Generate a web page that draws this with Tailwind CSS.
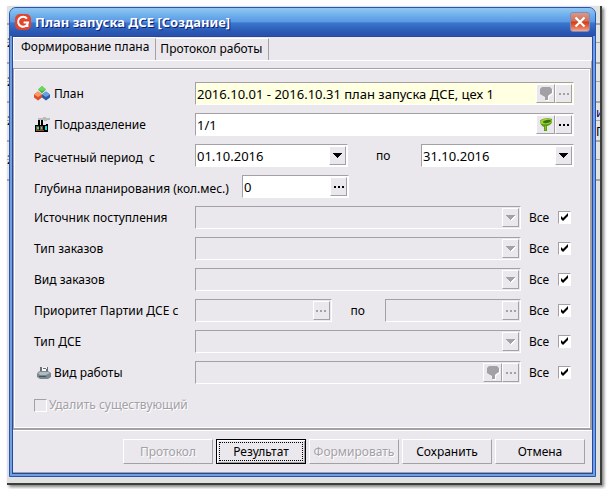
<!DOCTYPE html>
<html lang="ru">
<head>
<meta charset="utf-8">
<meta name="viewport" content="width=device-width, initial-scale=1">
<title>План запуска ДСЕ [Создание]</title>
<script src="https://cdn.jsdelivr.net/npm/@tailwindcss/browser@4"></script>
</head>
<body class="bg-white font-['Noto_Sans','Open_Sans',sans-serif] text-xs leading-4 text-black">

<!-- Shared icon symbols -->
<svg class="hidden" aria-hidden="true">
  <symbol id="arrow" viewBox="0 0 9 5"><path d="M0 0h9v1h-1v1h-1v1h-1v1h-1v1h-1v-1h-1v-1h-1v-1h-1v-1h-1z" fill="currentColor"/></symbol>
  <symbol id="dots" viewBox="0 0 10 2"><path d="M0 0h2v2h-2zM4 0h2v2h-2zM8 0h2v2h-2z" fill="currentColor"/></symbol>
  <symbol id="funnel" viewBox="0 0 14 14"><path d="M4 1h8l2 2v4l-3 2-1 1v4h-3v-3l-2-1-3-2v-5z" fill="#fff"/><path d="M3 0h8l2 2v4l-3 2-1 1v4h-3v-3l-2-1-3-2v-5z" fill="#a3a1a6"/></symbol>
  <symbol id="tick" viewBox="0 0 9 9"><path d="M1 3v3l2 2 5-5v-3l-5 5z" fill="#000"/></symbol>
</svg>

<div class="relative mr-[5px] ml-[7px] mt-[6px] mb-1 border-r-2 border-b-2 border-[#3c3e3c] bg-[#e0e2e0] pl-[2px] pr-[4px] pt-px pb-[6px] shadow-[2px_2px_3px_rgba(0,0,0,0.5)]">

  <!-- Slivers of the table behind the dialog -->
  <div class="absolute top-[17px] left-0 h-[158px] w-[2px] overflow-hidden bg-[repeating-linear-gradient(to_bottom,#a3a3a8_0_2px,#e2e4e2_2px_19px,#a3a3a8_19px_20px,#e2e4e2_20px_39px)] leading-[39px]">2<br>2<br>2<br>2</div>
  <div class="absolute top-[17px] right-0 h-[158px] w-[4px] overflow-hidden bg-[repeating-linear-gradient(to_bottom,#a3a3a8_0_2px,#e2e4e2_2px_19px,#a3a3a8_19px_20px,#e2e4e2_20px_39px)] pt-[80px] leading-[19px]"><span class="text-[#000080]">из</span><br>Гч</div>

  <section class="relative overflow-hidden rounded-t-[7px] border border-[#2a52b8] bg-[#6fa0e0]" role="dialog" aria-labelledby="ttl">
    <header class="flex h-[28px] items-center gap-1 bg-[linear-gradient(to_bottom,#92c8f0_0,#6fb0ec_25%,#5a98e4_50%,#3a78cc_53%,#2a58b4_85%,#2850ac_100%)] pl-[5px] pr-[5px]">
      <svg class="size-4" viewBox="0 0 16 16" aria-hidden="true"><rect width="16" height="16" rx="5" fill="#e2452c"/><path d="M12 4.600A5 5 0 1 0 13 8.600H8.600M12.400 8.600V13" fill="none" stroke="#fff" stroke-width="2"/></svg>
      <h1 id="ttl" class="grow text-[13px] font-bold text-white [text-shadow:1px_1px_0_#0a1e7c]">План запуска ДСЕ [Создание]</h1>
      <button class="grid size-5 place-items-center rounded-[3px] border border-[#7c8cc0] bg-[linear-gradient(to_bottom,#d89888_0,#d07058_45%,#d43c14_50%,#e87050_80%,#f4a890_100%)]" aria-label="Закрыть">
        <svg class="size-[12px]" viewBox="0 0 12 12"><path d="M1.500 1.500 10.500 10.500M10.500 1.500 1.500 10.500" stroke="#fff" stroke-width="2.200"/></svg>
      </button>
    </header>

    <div class="mx-[2px] mb-[2px] border border-t-0 border-[#2848a0] bg-[#eae8ed]">
      <div class="border-t border-[#2848a0]">
        <!-- Tabs -->
        <nav class="flex h-[23px] items-end" role="tablist">
          <button role="tab" aria-selected="true" class="h-[23px] border-t border-l border-white pl-[7px] pr-[6px] pb-1">Формирование плана</button>
          <button role="tab" aria-selected="false" class="h-[22px] border-t border-l border-r border-t-white border-l-[#a3a1a6] border-r-[#a3a1a6] pl-[4px] pr-[6px] pb-px">Протокол работы</button>
        </nav>
        <div class="h-[8px] border-t border-r border-t-white border-r-[#a3a1a6]"></div>

        <!-- Form page -->
        <main class="border-t border-l border-b-2 border-r-2 border-[#a3a1a6]">
          <form class="flex flex-col gap-2 border border-white pt-3 pr-[15px] pb-[14px] pl-[19px]">

            <div class="flex h-[23px] items-center">
              <label for="plan" class="flex w-[161px] items-center gap-[4px]">
                <svg class="size-4" viewBox="0 0 16 16" aria-hidden="true"><path d="M8 0l4 3.500-4 4-4-4z" fill="#3cb43c"/><path d="M8 0l4 3.500-4 1.500-4-1.500z" fill="#6cd860"/><path d="M4 5.500l4 3v3l-4 3-4-3v-3z" fill="#d8502c"/><path d="M4 5.500l4 3-4 2.500-4-2.500z" fill="#f89868"/><path d="M12 5.500l4 3v3l-4 3-4-3v-3z" fill="#2c5ca8"/><path d="M12 5.500l4 3-4 2.500-4-2.500z" fill="#6ca0e4"/></svg>
                План</label>
              <div class="flex h-full min-w-0 flex-1 border border-[#a3a1a6] border-r-white border-b-white bg-[#ffffe1] p-px">
                <input id="plan" readonly value="2016.10.01 - 2016.10.31 план запуска ДСЕ, цех 1" class="min-w-0 flex-1 text-[13px] outline-none">
                <button type="button" disabled aria-label="Фильтр плана" class="grid w-[19px] place-items-center border border-white border-r-[#a3a1a6] border-b-[#a3a1a6] bg-[#eae8ed]"><svg class="size-[14px]"><use href="#funnel"/></svg></button>
                <button type="button" disabled aria-label="Выбрать план" class="grid w-[17px] place-items-center border border-white border-r-[#a3a1a6] border-b-[#a3a1a6] bg-[#eae8ed] text-[#a3a1a6]"><svg class="h-[2px] w-[10px]"><use href="#dots"/></svg></button>
              </div>
            </div>

            <div class="flex h-[23px] items-center">
              <label for="dept" class="flex w-[161px] items-center gap-[4px]">
                <svg class="size-4" viewBox="0 0 16 16" aria-hidden="true"><path d="M4 1h5v-1h3v1h4v2h-3v1h-3v-1h-6z" fill="#bbb"/><path d="M4 3h2v5h1v-5h2v5h3v-1h2v8h-13v-7h3z" fill="#000"/><path d="M2 9h3v4h-3zM6 9h3v4h-3zM2 13h8v1h-8z" fill="#8c4c14"/><path d="M3 10h2v2h-2zM7 10h1v2h-1zM11 9h2v4h-2z" fill="#00e8f8"/></svg>
                Подразделение</label>
              <div class="flex h-full min-w-0 flex-1 border border-[#a3a1a6] border-r-white border-b-white bg-white p-px">
                <input id="dept" value="1/1" class="min-w-0 flex-1 text-[13px] outline-none">
                <button type="button" aria-label="Фильтр подразделений" class="grid w-[19px] place-items-center border border-white border-r-[#a3a1a6] border-b-[#a3a1a6] bg-[#eae8ed]"><svg class="size-[14px]" viewBox="0 0 14 14"><path d="M1 3q1-2 5-2.500t7 .5v3q-1 3-5 4v5h-3v-4q-4-2-4-6z" fill="#5c9c14"/><ellipse cx="7" cy="3.500" rx="6" ry="2.700" transform="rotate(-10 7 3.500)" fill="#a0d038"/><ellipse cx="8" cy="3.500" rx="4" ry="1.600" transform="rotate(-10 8 3.500)" fill="#3c7010"/><path d="M6 8h1v4h-1z" fill="#90c030"/></svg></button>
                <button type="button" aria-label="Выбрать подразделение" class="grid w-[17px] place-items-center border border-white border-r-[#a3a1a6] border-b-[#a3a1a6] bg-[#eae8ed]"><svg class="h-[2px] w-[10px]"><use href="#dots"/></svg></button>
              </div>
            </div>

            <div class="flex h-[23px] items-center">
              <label for="from" class="w-[161px] whitespace-pre pt-1">Расчетный период  с</label>
              <div class="relative h-full min-w-0 flex-1 border border-[#a3a1a6] border-r-white border-b-white bg-white p-px">
                <select id="from" class="block size-full appearance-none text-[13px] outline-none"><option>01.10.2016</option></select>
                <span class="pointer-events-none absolute inset-y-px right-px grid w-[17px] place-items-center border border-white border-r-[#a3a1a6] border-b-[#a3a1a6] bg-[#eae8ed]"><svg class="h-[5px] w-[9px]"><use href="#arrow"/></svg></span>
              </div>
              <label for="to" class="w-[73px] pl-[28px]">по</label>
              <div class="relative h-full min-w-0 flex-1 border border-[#a3a1a6] border-r-white border-b-white bg-white p-px">
                <select id="to" class="block size-full appearance-none text-[13px] outline-none"><option>31.10.2016</option></select>
                <span class="pointer-events-none absolute inset-y-px right-px grid w-[17px] place-items-center border border-white border-r-[#a3a1a6] border-b-[#a3a1a6] bg-[#eae8ed]"><svg class="h-[5px] w-[9px]"><use href="#arrow"/></svg></span>
              </div>
            </div>

            <div class="flex h-[23px] items-center">
              <label for="depth" class="w-[208px] whitespace-nowrap pt-1">Глубина планирования (кол.мес.)</label>
              <div class="flex h-full w-[107px] border border-[#a3a1a6] border-r-white border-b-white bg-white p-px">
                <input id="depth" value="0" class="min-w-0 flex-1 text-[13px] outline-none">
                <button type="button" aria-label="Выбрать глубину" class="grid w-[17px] place-items-center border border-white border-r-[#a3a1a6] border-b-[#a3a1a6] bg-[#eae8ed]"><svg class="h-[2px] w-[10px]"><use href="#dots"/></svg></button>
              </div>
            </div>

            <div class="flex h-[23px] items-center">
              <label for="src" class="w-[161px]">Источник поступления</label>
              <div class="relative h-full min-w-0 flex-1 border border-[#a3a1a6] border-r-white border-b-white">
                <select id="src" disabled class="block size-full appearance-none"></select>
                <span class="pointer-events-none absolute inset-y-px right-px grid w-[17px] place-items-center border border-white border-r-[#a3a1a6] border-b-[#a3a1a6] text-[#a3a1a6]"><svg class="h-[5px] w-[9px] drop-shadow-[1px_1px_0_#fff]"><use href="#arrow"/></svg></span>
              </div>
              <label class="flex w-[53px] items-center justify-between pl-2 pr-[3px]">Все<span class="grid size-[13px]"><input type="checkbox" checked class="peer col-start-1 row-start-1 size-[13px] appearance-none border border-[#a3a1a6] border-r-white border-b-white bg-white"><svg class="pointer-events-none invisible col-start-1 row-start-1 m-[2px] size-[9px] peer-checked:visible"><use href="#tick"/></svg></span></label>
            </div>

            <div class="flex h-[23px] items-center">
              <label for="otype" class="w-[161px]">Тип заказов</label>
              <div class="relative h-full min-w-0 flex-1 border border-[#a3a1a6] border-r-white border-b-white">
                <select id="otype" disabled class="block size-full appearance-none"></select>
                <span class="pointer-events-none absolute inset-y-px right-px grid w-[17px] place-items-center border border-white border-r-[#a3a1a6] border-b-[#a3a1a6] text-[#a3a1a6]"><svg class="h-[5px] w-[9px] drop-shadow-[1px_1px_0_#fff]"><use href="#arrow"/></svg></span>
              </div>
              <label class="flex w-[53px] items-center justify-between pl-2 pr-[3px]">Все<span class="grid size-[13px]"><input type="checkbox" checked class="peer col-start-1 row-start-1 size-[13px] appearance-none border border-[#a3a1a6] border-r-white border-b-white bg-white"><svg class="pointer-events-none invisible col-start-1 row-start-1 m-[2px] size-[9px] peer-checked:visible"><use href="#tick"/></svg></span></label>
            </div>

            <div class="flex h-[23px] items-center">
              <label for="okind" class="w-[161px]">Вид заказов</label>
              <div class="relative h-full min-w-0 flex-1 border border-[#a3a1a6] border-r-white border-b-white">
                <select id="okind" disabled class="block size-full appearance-none"></select>
                <span class="pointer-events-none absolute inset-y-px right-px grid w-[17px] place-items-center border border-white border-r-[#a3a1a6] border-b-[#a3a1a6] text-[#a3a1a6]"><svg class="h-[5px] w-[9px] drop-shadow-[1px_1px_0_#fff]"><use href="#arrow"/></svg></span>
              </div>
              <label class="flex w-[53px] items-center justify-between pl-2 pr-[3px]">Все<span class="grid size-[13px]"><input type="checkbox" checked class="peer col-start-1 row-start-1 size-[13px] appearance-none border border-[#a3a1a6] border-r-white border-b-white bg-white"><svg class="pointer-events-none invisible col-start-1 row-start-1 m-[2px] size-[9px] peer-checked:visible"><use href="#tick"/></svg></span></label>
            </div>

            <div class="flex h-[23px] items-center">
              <label for="pfrom" class="w-[161px]">Приоритет Партии ДСЕ с</label>
              <div class="flex h-full min-w-0 flex-1 border border-[#a3a1a6] border-r-white border-b-white p-px">
                <input id="pfrom" disabled class="min-w-0 flex-1">
                <button type="button" disabled aria-label="Выбрать приоритет с" class="grid w-[17px] place-items-center border border-white border-r-[#a3a1a6] border-b-[#a3a1a6] text-[#a3a1a6]"><svg class="h-[2px] w-[10px]"><use href="#dots"/></svg></button>
              </div>
              <label for="pto" class="w-[53px] pl-[19px]">по</label>
              <div class="flex h-full min-w-0 flex-1 border border-[#a3a1a6] border-r-white border-b-white p-px">
                <input id="pto" disabled class="min-w-0 flex-1">
                <button type="button" disabled aria-label="Выбрать приоритет по" class="grid w-[17px] place-items-center border border-white border-r-[#a3a1a6] border-b-[#a3a1a6] text-[#a3a1a6]"><svg class="h-[2px] w-[10px]"><use href="#dots"/></svg></button>
              </div>
              <label class="flex w-[53px] items-center justify-between pl-2 pr-[3px]">Все<span class="grid size-[13px]"><input type="checkbox" checked class="peer col-start-1 row-start-1 size-[13px] appearance-none border border-[#a3a1a6] border-r-white border-b-white bg-white"><svg class="pointer-events-none invisible col-start-1 row-start-1 m-[2px] size-[9px] peer-checked:visible"><use href="#tick"/></svg></span></label>
            </div>

            <div class="flex h-[23px] items-center">
              <label for="dtype" class="w-[161px]">Тип ДСЕ</label>
              <div class="relative h-full min-w-0 flex-1 border border-[#a3a1a6] border-r-white border-b-white">
                <select id="dtype" disabled class="block size-full appearance-none"></select>
                <span class="pointer-events-none absolute inset-y-px right-px grid w-[17px] place-items-center border border-white border-r-[#a3a1a6] border-b-[#a3a1a6] text-[#a3a1a6]"><svg class="h-[5px] w-[9px] drop-shadow-[1px_1px_0_#fff]"><use href="#arrow"/></svg></span>
              </div>
              <label class="flex w-[53px] items-center justify-between pl-2 pr-[3px]">Все<span class="grid size-[13px]"><input type="checkbox" checked class="peer col-start-1 row-start-1 size-[13px] appearance-none border border-[#a3a1a6] border-r-white border-b-white bg-white"><svg class="pointer-events-none invisible col-start-1 row-start-1 m-[2px] size-[9px] peer-checked:visible"><use href="#tick"/></svg></span></label>
            </div>

            <div class="flex h-[23px] items-center">
              <label for="work" class="flex w-[161px] items-center gap-[3px] pl-[3px]">
                <svg class="size-[14px]" viewBox="0 0 14 14" aria-hidden="true"><path d="M4 1h6v5h-6z" fill="#f4f4f4"/><path d="M3 1h2v2h1v-1h3v1h1v-2h1v5h-8z" fill="#6c7074"/><path d="M5 3h4v3h-4z" fill="#fff"/><path d="M1 6l2-1h8l3 2v4l-3 2h-8l-3-2v-3z" fill="#7c8890"/><path d="M1 7l2-1h8l2 1-4 2h-6z" fill="#b0bcc4"/><path d="M2 10h7v1h-7z" fill="#48545c"/></svg>
                Вид работы</label>
              <div class="flex h-full min-w-0 flex-1 border border-[#a3a1a6] border-r-white border-b-white p-px">
                <input id="work" disabled class="min-w-0 flex-1">
                <button type="button" disabled aria-label="Фильтр вида работы" class="grid w-[19px] place-items-center border border-white border-r-[#a3a1a6] border-b-[#a3a1a6]"><svg class="size-[14px]"><use href="#funnel"/></svg></button>
                <button type="button" disabled aria-label="Выбрать вид работы" class="grid w-[17px] place-items-center border border-white border-r-[#a3a1a6] border-b-[#a3a1a6] text-[#a3a1a6]"><svg class="h-[2px] w-[10px]"><use href="#dots"/></svg></button>
              </div>
              <label class="flex w-[53px] items-center justify-between pl-2 pr-[3px]">Все<span class="grid size-[13px]"><input type="checkbox" checked class="peer col-start-1 row-start-1 size-[13px] appearance-none border border-[#a3a1a6] border-r-white border-b-white bg-white"><svg class="pointer-events-none invisible col-start-1 row-start-1 m-[2px] size-[9px] peer-checked:visible"><use href="#tick"/></svg></span></label>
            </div>

            <label class="flex items-center gap-[2px] pt-[5px] text-[#a3a1a6] [text-shadow:1px_1px_0_#fff]"><input type="checkbox" disabled class="size-[13px] appearance-none border border-[#a3a1a6] border-r-white border-b-white">Удалить существующий</label>
          </form>
        </main>

        <footer class="flex justify-end gap-[3px] border-t border-b border-t-white border-b-[#a3a1a6] pt-[8px] pr-[7px] pb-[8px]">
          <button disabled class="h-[25px] w-[90px] border border-white border-r-[#a3a1a6] border-b-[#a3a1a6] text-[#a3a1a6] [text-shadow:1px_1px_0_#fff]">Протокол</button>
          <button class="h-[25px] w-[90px] border border-black p-[2px] shadow-[inset_1px_1px_0_#fff,inset_-1px_-1px_0_#a3a1a6]"><span class="grid size-full place-items-center border border-dotted border-black">Результат</span></button>
          <button disabled class="h-[25px] w-[90px] border border-white border-r-[#a3a1a6] border-b-[#a3a1a6] text-[#a3a1a6] [text-shadow:1px_1px_0_#fff]">Формировать</button>
          <button class="h-[25px] w-[90px] border border-white border-r-[#a3a1a6] border-b-[#a3a1a6]">Сохранить</button>
          <button class="h-[25px] w-[90px] border border-white border-r-[#a3a1a6] border-b-[#a3a1a6]">Отмена</button>
        </footer>
      </div>
    </div>
  </section>
</div>
</body>
</html>
